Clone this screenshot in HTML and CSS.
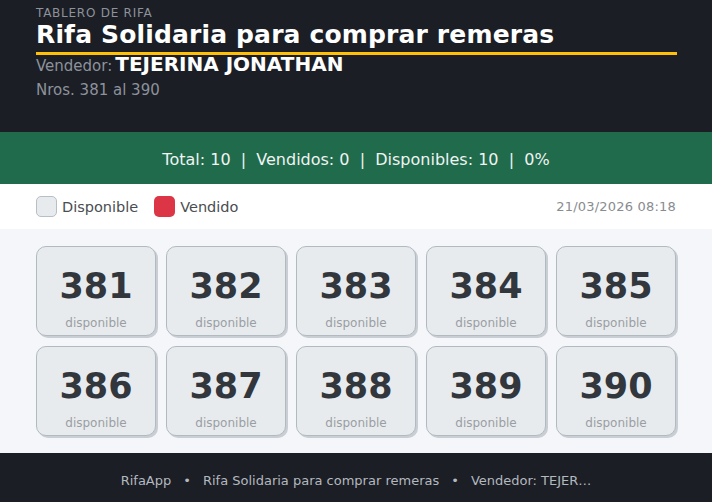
FILE: index.html
```html
<!DOCTYPE html>
<html lang="es">
<head>
<meta charset="utf-8">
<title>Rifa Solidaria</title>
<link rel="stylesheet" href="styles.css">
</head>
<body>
<header class="top">
  <div class="kicker">TABLERO DE RIFA</div>
  <h1 class="title">Rifa Solidaria para comprar remeras</h1>
  <div class="seller"><span class="seller-label">Vendedor:</span><span class="seller-name">TEJERINA JONATHAN</span></div>
  <div class="range">Nros. 381 al 390</div>
</header>
<section class="stats">Total: 10 &nbsp;|&nbsp; Vendidos: 0 &nbsp;|&nbsp; Disponibles: 10 &nbsp;|&nbsp; 0%</section>
<section class="legend">
  <div class="legend-items">
    <span class="swatch swatch-free"></span><span class="legend-text">Disponible</span>
    <span class="swatch swatch-sold"></span><span class="legend-text">Vendido</span>
  </div>
  <div class="date">21/03/2026 08:18</div>
</section>
<main class="board">
  <div class="grid">
    <div class="card"><div class="num">381</div><div class="state">disponible</div></div>
    <div class="card"><div class="num">382</div><div class="state">disponible</div></div>
    <div class="card"><div class="num">383</div><div class="state">disponible</div></div>
    <div class="card"><div class="num">384</div><div class="state">disponible</div></div>
    <div class="card"><div class="num">385</div><div class="state">disponible</div></div>
    <div class="card"><div class="num">386</div><div class="state">disponible</div></div>
    <div class="card"><div class="num">387</div><div class="state">disponible</div></div>
    <div class="card"><div class="num">388</div><div class="state">disponible</div></div>
    <div class="card"><div class="num">389</div><div class="state">disponible</div></div>
    <div class="card"><div class="num">390</div><div class="state">disponible</div></div>
  </div>
</main>
<footer class="foot"><span class="foot-text">RifaApp<span class="sep">•</span>Rifa Solidaria para comprar remeras<span class="sep">•</span>Vendedor: TEJER…</span></footer>
</body>
</html>
```
FILE: styles.css
```css
* { box-sizing: border-box; }
html, body { margin: 0; padding: 0; }
body {
  font-family: "DejaVu Sans", sans-serif;
  background: #1b1e25;
  width: 712px;
  height: 502px;
  overflow: hidden;
}
.top {
  background: #1b1e25;
  padding: 6px 35px 0 36px;
  height: 132px;
}
.kicker {
  color: #8d929b;
  font-size: 12px;
  letter-spacing: 0.75px;
  line-height: 15px;
}
.title {
  margin: 0;
  color: #ffffff;
  font-size: 25px;
  letter-spacing: 0.15px;
  font-weight: bold;
  line-height: 28px;
  padding-bottom: 3px;
  border-bottom: 3px solid #ffc107;
}
.seller {
  margin-top: -3px;
  line-height: 24px;
}
.seller-label {
  color: #8d929b;
  font-size: 15px;
  margin-right: 3px;
}
.seller-name {
  color: #ffffff;
  font-size: 20px;
  font-weight: bold;
}
.range {
  margin-top: 1px;
  color: #8d929b;
  font-size: 15px;
  line-height: 22px;
}
.stats {
  background: #1f6b4c;
  color: #f1f3f2;
  height: 52px;
  padding-top: 2px;
  display: flex;
  align-items: center;
  justify-content: center;
  font-size: 16px;
}
.legend {
  background: #ffffff;
  height: 45px;
  padding: 0 36px;
  display: flex;
  align-items: center;
  justify-content: space-between;
}
.legend-items {
  display: flex;
  align-items: center;
}
.swatch {
  width: 21px;
  height: 21px;
  border-radius: 5px;
  margin-right: 5px;
}
.swatch-free {
  background: #e8ebee;
  border: 1px solid #b7bec5;
}
.swatch-sold {
  background: #dc3545;
  margin-left: 16px;
}
.legend-text {
  color: #4a4d52;
  font-size: 14.5px;
}
.date {
  color: #888b90;
  font-size: 13px;
  letter-spacing: 0.2px;
}
.board {
  background: #f4f6f9;
  padding: 17px 36px 17px 36px;
}
.grid {
  display: grid;
  grid-template-columns: repeat(5, 120px);
  gap: 10px;
}
.card {
  height: 90px;
  background: #e8ebee;
  border: 1px solid #b2bac1;
  border-radius: 10px;
  box-shadow: 2px 2px 0 #c8ced3;
  display: flex;
  flex-direction: column;
  align-items: center;
  padding-top: 19px;
}
.num {
  color: #32363d;
  font-size: 35px;
  font-weight: bold;
  line-height: 40px;
}
.state {
  color: #9a9ea3;
  font-size: 12px;
  line-height: 16px;
  margin-top: 9px;
}
.foot {
  background: #1b1e25;
  height: 49px;
  padding-top: 5px;
  display: flex;
  align-items: center;
  justify-content: center;
}
.foot-text {
  color: #b4b8bf;
  font-size: 13px;
  white-space: nowrap;
}
.sep {
  margin: 0 12px;
}
```
